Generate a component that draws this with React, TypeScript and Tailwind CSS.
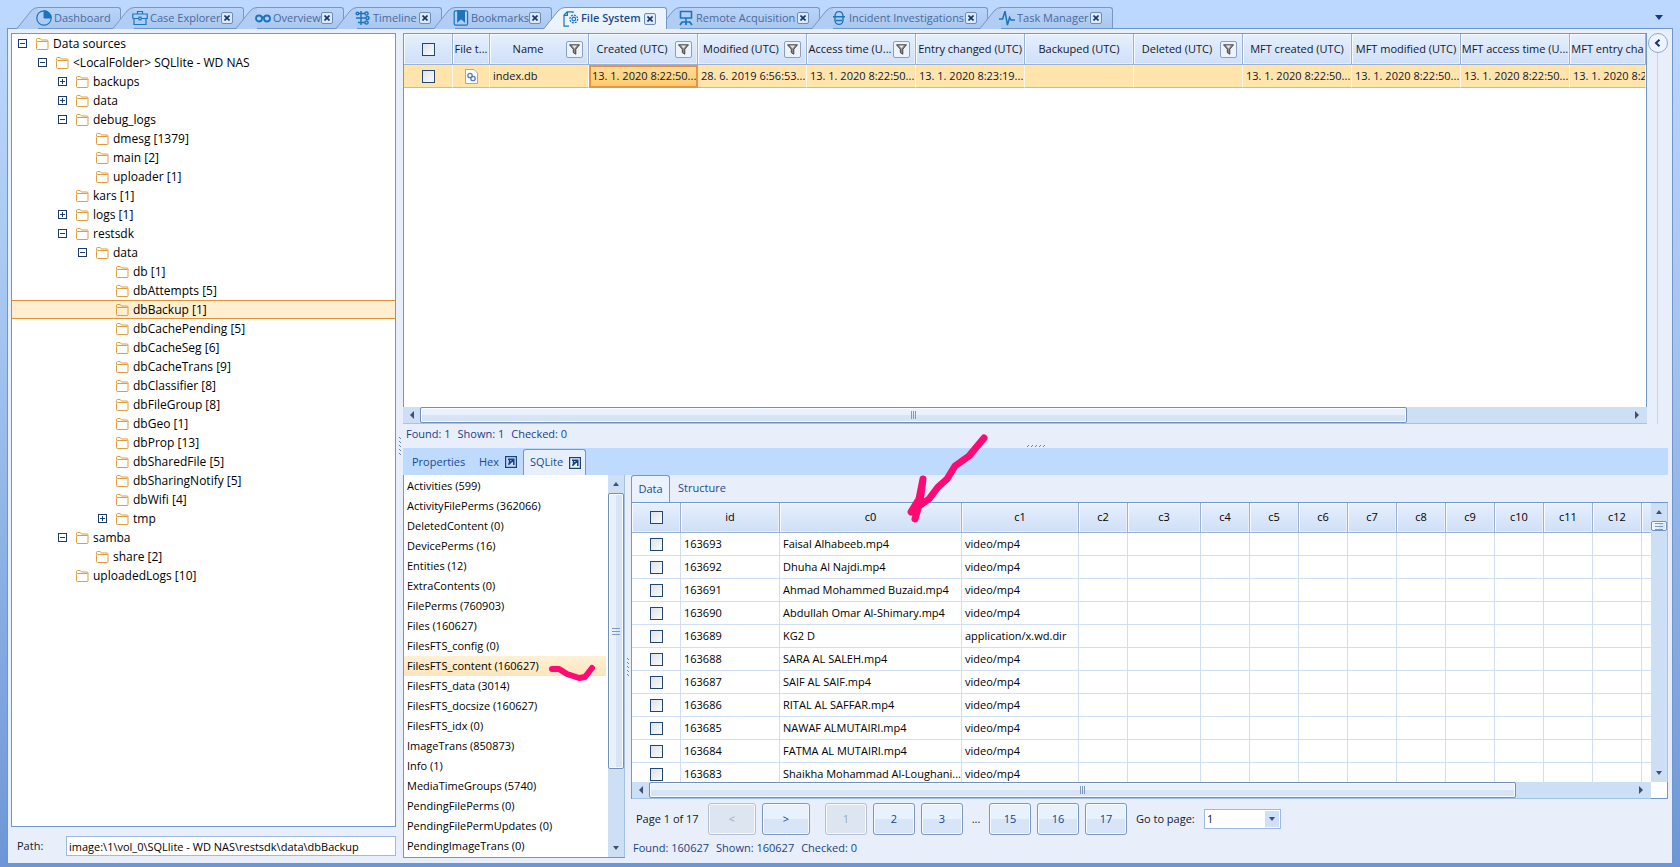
import type { ReactNode } from 'react';

type IconName = 'dashboard' | 'case' | 'overview' | 'timeline' | 'bookmark' | 'file' | 'remote' | 'incident' | 'task';

const tabs: { label: string; icon: IconName; width: string; closable: boolean; active?: boolean }[] = [
  { label: 'Dashboard', icon: 'dashboard', width: 'w-[104px]', closable: false },
  { label: 'Case Explorer', icon: 'case', width: 'w-[131px]', closable: true },
  { label: 'Overview', icon: 'overview', width: 'w-[108px]', closable: true },
  { label: 'Timeline', icon: 'timeline', width: 'w-[106px]', closable: true },
  { label: 'Bookmarks', icon: 'bookmark', width: 'w-[118px]', closable: true },
  { label: 'File System', icon: 'file', width: 'w-[123px]', closable: true, active: true },
  { label: 'Remote Acquisition', icon: 'remote', width: 'w-[161px]', closable: true },
  { label: 'Incident Investigations', icon: 'incident', width: 'w-[176px]', closable: true },
  { label: 'Task Manager', icon: 'task', width: 'w-[133px]', closable: true },
];

const levelPadding = ['pl-[6px]', 'pl-[26px]', 'pl-[46px]', 'pl-[66px]', 'pl-[86px]'];

const treeNodes: { label: string; level: number; state?: 'open' | 'closed'; selected?: boolean }[] = [
  { label: 'Data sources', level: 0, state: 'open' },
  { label: '<LocalFolder> SQLlite - WD NAS', level: 1, state: 'open' },
  { label: 'backups', level: 2, state: 'closed' },
  { label: 'data', level: 2, state: 'closed' },
  { label: 'debug_logs', level: 2, state: 'open' },
  { label: 'dmesg [1379]', level: 3 },
  { label: 'main [2]', level: 3 },
  { label: 'uploader [1]', level: 3 },
  { label: 'kars [1]', level: 2 },
  { label: 'logs [1]', level: 2, state: 'closed' },
  { label: 'restsdk', level: 2, state: 'open' },
  { label: 'data', level: 3, state: 'open' },
  { label: 'db [1]', level: 4 },
  { label: 'dbAttempts [5]', level: 4 },
  { label: 'dbBackup [1]', level: 4, selected: true },
  { label: 'dbCachePending [5]', level: 4 },
  { label: 'dbCacheSeg [6]', level: 4 },
  { label: 'dbCacheTrans [9]', level: 4 },
  { label: 'dbClassifier [8]', level: 4 },
  { label: 'dbFileGroup [8]', level: 4 },
  { label: 'dbGeo [1]', level: 4 },
  { label: 'dbProp [13]', level: 4 },
  { label: 'dbSharedFile [5]', level: 4 },
  { label: 'dbSharingNotify [5]', level: 4 },
  { label: 'dbWifi [4]', level: 4 },
  { label: 'tmp', level: 4, state: 'closed' },
  { label: 'samba', level: 2, state: 'open' },
  { label: 'share [2]', level: 3 },
  { label: 'uploadedLogs [10]', level: 2 },
];

const fileColumns: { label: string; value: string; filter?: boolean; width: string }[] = [
  { label: 'Name', value: 'index.db', filter: true, width: 'w-[99px]' },
  { label: 'Created (UTC)', value: '13. 1. 2020 8:22:50...', filter: true, width: 'w-[109px]' },
  { label: 'Modified (UTC)', value: '28. 6. 2019 6:56:53...', filter: true, width: 'w-[109px]' },
  { label: 'Access time (U...', value: '13. 1. 2020 8:22:50...', filter: true, width: 'w-[109px]' },
  { label: 'Entry changed (UTC)', value: '13. 1. 2020 8:23:19...', width: 'w-[109px]' },
  { label: 'Backuped (UTC)', value: '', width: 'w-[109px]' },
  { label: 'Deleted (UTC)', value: '', filter: true, width: 'w-[109px]' },
  { label: 'MFT created (UTC)', value: '13. 1. 2020 8:22:50...', width: 'w-[109px]' },
  { label: 'MFT modified (UTC)', value: '13. 1. 2020 8:22:50...', width: 'w-[109px]' },
  { label: 'MFT access time (U...', value: '13. 1. 2020 8:22:50...', width: 'w-[109px]' },
  { label: 'MFT entry cha', value: '13. 1. 2020 8:2', width: 'w-auto' },
];

const sqlTables = [
  'Activities (599)',
  'ActivityFilePerms (362066)',
  'DeletedContent (0)',
  'DevicePerms (16)',
  'Entities (12)',
  'ExtraContents (0)',
  'FilePerms (760903)',
  'Files (160627)',
  'FilesFTS_config (0)',
  'FilesFTS_content (160627)',
  'FilesFTS_data (3014)',
  'FilesFTS_docsize (160627)',
  'FilesFTS_idx (0)',
  'ImageTrans (850873)',
  'Info (1)',
  'MediaTimeGroups (5740)',
  'PendingFilePerms (0)',
  'PendingFilePermUpdates (0)',
  'PendingImageTrans (0)',
];

const rows = [
  ['163693', 'Faisal Alhabeeb.mp4', 'video/mp4'],
  ['163692', 'Dhuha Al Najdi.mp4', 'video/mp4'],
  ['163691', 'Ahmad Mohammed Buzaid.mp4', 'video/mp4'],
  ['163690', 'Abdullah Omar Al-Shimary.mp4', 'video/mp4'],
  ['163689', 'KG2 D', 'application/x.wd.dir'],
  ['163688', 'SARA AL SALEH.mp4', 'video/mp4'],
  ['163687', 'SAIF AL SAIF.mp4', 'video/mp4'],
  ['163686', 'RITAL AL SAFFAR.mp4', 'video/mp4'],
  ['163685', 'NAWAF ALMUTAIRI.mp4', 'video/mp4'],
  ['163684', 'FATMA AL MUTAIRI.mp4', 'video/mp4'],
  ['163683', 'Shaikha Mohammad Al-Loughani...', 'video/mp4'],
];

const dataColumns = [
  { label: 'id', width: 'w-[99px]' },
  { label: 'c0', width: 'w-[182px]' },
  { label: 'c1', width: 'w-[117px]' },
  { label: 'c2', width: 'w-[49px]' },
  { label: 'c3', width: 'w-[73px]' },
  { label: 'c4', width: 'w-[49px]' },
  { label: 'c5', width: 'w-[49px]' },
  { label: 'c6', width: 'w-[49px]' },
  { label: 'c7', width: 'w-[49px]' },
  { label: 'c8', width: 'w-[49px]' },
  { label: 'c9', width: 'w-[49px]' },
  { label: 'c10', width: 'w-[49px]' },
  { label: 'c11', width: 'w-[49px]' },
  { label: 'c12', width: 'w-[49px]' },
  { label: '', width: 'w-[49px]' },
];

function TabIcon({ name }: { name: IconName }) {
  const common = { width: 16, height: 16, viewBox: '0 0 16 16', fill: 'none', stroke: '#1b75bb', className: 'shrink-0' };
  switch (name) {
    case 'dashboard':
      return (
        <svg {...common}>
          <circle cx="8" cy="8" r="7.2" strokeWidth="1.2" />
          <path d="M8 0.8A7.2 7.2 0 0 1 15.2 8H8z" fill="#1b75bb" />
        </svg>
      );
    case 'case':
      return (
        <svg {...common} strokeWidth="1.2">
          <path d="M5.5 4V1.5h5V4M.8 8.500V4h14.4v4.500H.8M2 8.500v6h12v-6" />
          <rect x="7" y="7.2" width="2" height="2.6" fill="#fff" />
        </svg>
      );
    case 'overview':
      return (
        <svg {...common} strokeWidth="1.8">
          <circle cx="4" cy="8.5" r="3" />
          <circle cx="12" cy="8.5" r="3" />
          <path d="M6.8 7.6q1.2-.8 2.4 0" />
        </svg>
      );
    case 'timeline':
      return (
        <svg {...common} strokeWidth="1.5">
          <path d="M6 1v14M1 3.500h9M1 8h10M3 12.500h7" />
          <circle cx="11.500" cy="3.500" r="1.6" fill="#b1cdf3" />
          <circle cx="12.500" cy="8" r="1.500" fill="#b1cdf3" />
          <circle cx="11.500" cy="12.500" r="1.6" fill="#b1cdf3" />
          <circle cx="2.500" cy="3.500" r="1.300" fill="#b1cdf3" />
        </svg>
      );
    case 'bookmark':
      return (
        <svg {...common} strokeWidth="1.2">
          <rect x="1.2" y=".8" width="13.4" height="14.4" rx="1.5" />
          <path d="M4.8.8h6.6v10.6L8.1 8.6l-3.3 2.8z" fill="#1b75bb" />
        </svg>
      );
    case 'file':
      return (
        <svg {...common} strokeWidth="1.2">
          <path d="M10 2V.8H4.2L1 4v11.2h5M1 4.4h3.4V1" />
          <circle cx="10.8" cy="8" r="3.9" strokeDasharray="2 1" />
          <circle cx="10.8" cy="8" r="1.8" />
        </svg>
      );
    case 'remote':
      return (
        <svg {...common} strokeWidth="1.6">
          <path d="M2.5 1.5h11v6.5h-11zM8 8v4M4 12h8" />
          <path d="M2 15l2.4-3.2M14 15l-2.4-3.2M8 12v3" strokeWidth="1.8" />
        </svg>
      );
    case 'incident':
      return (
        <svg {...common} strokeWidth="1.4">
          <path d="M4 6.5C4 3.5 5.5 1.6 8 1.6s4 1.9 4 4.9M2 6.8h12M4 7v3.2c0 2.3 1.8 4.2 4 4.2s4-1.9 4-4.2V7M5 10.5h6" />
        </svg>
      );
    case 'task':
      return (
        <svg {...common} strokeWidth="1.5">
          <path d="M0 9h3.6L6 1.2 8.4 15l2.2-7.6L12 10h4" />
        </svg>
      );
  }
}

function FolderIcon() {
  return (
    <svg width="13" height="12" viewBox="0 0 13 12" fill="none" stroke="#e09b3d" className="shrink-0">
      <path d="M.5 3.500V1.500q0-1 1-1h2.700l1.300 1.500h5.500q1 0 1 1v7.500q0 1-1 1h-9.500q-1 0-1-1v-6q0-1 1-1h10" />
    </svg>
  );
}

function Toggle({ open }: { open: boolean }) {
  return (
    <svg width="9" height="9" viewBox="0 0 9 9" fill="none" stroke="#1d3c66">
      <rect x=".5" y=".5" width="8" height="8" fill="#fff" />
      <path d={open ? 'M2 4.5h5' : 'M2 4.5h5M4.5 2v5'} />
    </svg>
  );
}

function Filter() {
  return (
    <button
      aria-label="Filter"
      className="mr-[5px] flex h-[17px] w-[17px] shrink-0 items-center justify-center rounded-xs border border-[#8aa0c0] bg-[#edf3fb]"
    >
      <svg width="11" height="11" viewBox="0 0 11 11">
        <path d="M.5.8h10L6.8 5.2v5L4.3 8.6V5.2z" fill="#8b8b8b" stroke="#3a3a3a" strokeWidth=".9" />
        <path d="M3 1.6h5L5.5 4.4z" fill="#e6e6e6" />
      </svg>
    </button>
  );
}

function Check({ label }: { label: string }) {
  return (
    <input
      type="checkbox"
      aria-label={label}
      className="block h-[13px] w-[13px] appearance-none border border-[#24466f] bg-linear-to-br from-[#dde1e8] to-[#fafbfc]"
    />
  );
}

function Arrow({ dir }: { dir: 'up' | 'down' | 'left' | 'right' }) {
  const paths = { up: 'M1 6l3-4 3 4z', down: 'M1 2l3 4 3-4z', left: 'M6 0L2 4l4 4z', right: 'M2 0l4 4-4 4z' };
  return (
    <svg width="8" height="8" viewBox="0 0 8 8" fill="#3d5170">
      <path d={paths[dir]} />
    </svg>
  );
}

function HScroll({ thumb }: { thumb: string }) {
  return (
    <div className="flex h-[17px] shrink-0 border-b border-[#a5c2e8] bg-[#cddff5]">
      <button aria-label="Scroll left" className="flex w-[17px] items-center justify-center">
        <Arrow dir="left" />
      </button>
      <div className="flex-1">
        <div
          className={`flex h-4 items-center justify-center gap-[1px] rounded-xs border border-[#7391b8] bg-linear-to-b from-[#e8f1fc] from-50% to-[#d6e4f5] to-50% shadow-[inset_0_0_0_1px_#f8fbff] ${thumb}`}
        >
          <span className="h-2 w-px bg-[#7f9ac0]" />
          <span className="h-2 w-px bg-[#7f9ac0]" />
          <span className="h-2 w-px bg-[#7f9ac0]" />
        </div>
      </div>
      <button aria-label="Scroll right" className="flex w-5 items-center justify-center">
        <Arrow dir="right" />
      </button>
    </div>
  );
}

function VScroll({ thumb }: { thumb: string }) {
  return (
    <div className="flex w-[17px] shrink-0 flex-col border-r border-[#a5c2e8] bg-[#cddff5]">
      <button aria-label="Scroll up" className="flex h-[18px] items-center justify-center">
        <Arrow dir="up" />
      </button>
      <div className="min-h-0 flex-1">
        <div
          className={`flex w-4 flex-col items-center justify-center gap-[2px] rounded-xs border border-[#7391b8] bg-linear-to-r from-[#e8f1fc] from-50% to-[#d6e4f5] to-50% shadow-[inset_0_0_0_1px_#f8fbff] ${thumb}`}
        >
          <span className="h-px w-2 bg-[#7f9ac0]" />
          <span className="h-px w-2 bg-[#7f9ac0]" />
          <span className="h-px w-2 bg-[#7f9ac0]" />
        </div>
      </div>
      <button aria-label="Scroll down" className="flex h-[19px] items-center justify-center">
        <Arrow dir="down" />
      </button>
    </div>
  );
}

function HeadCell({ children }: { children?: ReactNode }) {
  return (
    <th className="overflow-hidden border-r border-b border-[#9ab3d4] bg-linear-to-b from-[#e6f0fd] to-[#cfdff7] p-0 font-normal whitespace-nowrap shadow-[inset_1px_1px_0_#f7fbff,inset_-1px_-1px_0_#e6effb]">
      {children}
    </th>
  );
}

function Tab({ label, icon, width, closable, active }: (typeof tabs)[number]) {
  return (
    <div className={`relative -mr-2 flex shrink-0 ${width} ${active ? 'z-10 -mb-px h-[22px]' : 'h-[21px]'}`}>
      <svg width="21" height="22" viewBox="0 0 21 22" className="shrink-0">
        <path d="M0 22L14 4Q17 .5 21 .5V22z" fill={active ? '#ebf3fd' : '#b1cdf3'} />
        <path d="M0 21.5L14 4Q17 .5 21 .5" fill="none" stroke="#7797c6" />
      </svg>
      <div
        className={`flex min-w-0 flex-1 items-center rounded-tr-[3px] border-t border-r border-[#7797c6] ${
          active ? 'bg-[#ebf3fd]' : 'bg-linear-to-b from-[#b9d4f8] to-[#a9c7ef]'
        }`}
      >
        <button
          className={`-ml-[2px] flex items-center gap-[2px] text-[11px] whitespace-nowrap ${
            active ? 'font-semibold text-[#1c4a8e]' : 'text-[#4a6a9c]'
          }`}
        >
          <TabIcon name={icon} />
          {label}
        </button>
        {closable && (
          <button
            aria-label={`Close ${label}`}
            className="mr-[10px] ml-auto flex h-[12px] w-[12px] shrink-0 items-center justify-center rounded-xs border border-[#6d8cb8] bg-[#dbe9fb]"
          >
            <svg width="6" height="6" viewBox="0 0 6 6" stroke="#15366b" strokeWidth="1.6">
              <path d="M.5.5l5 5M5.5.5l-5 5" />
            </svg>
          </button>
        )}
      </div>
    </div>
  );
}

function Tree() {
  return (
    <ul className="min-h-0 flex-1 overflow-hidden border border-[#6f98cc] bg-white text-[12px] text-black">
      {treeNodes.map((node, index) => (
        <li
          key={index}
          className={`flex h-[19px] items-center border-y ${levelPadding[node.level]} ${
            node.selected ? 'border-[#e0913a] bg-[#ffefd0]' : 'border-transparent'
          }`}
        >
          <span className="flex w-[18px] shrink-0">{node.state && <Toggle open={node.state === 'open'} />}</span>
          <button className="flex items-center gap-1 whitespace-nowrap">
            <FolderIcon />
            {node.label}
          </button>
        </li>
      ))}
    </ul>
  );
}

function FileGrid() {
  return (
    <section className="flex min-h-0 shrink grow basis-[5px] flex-col">
      <div className="flex min-h-0 flex-1">
        <div className="flex min-w-0 flex-1 flex-col">
          <div className="flex min-h-0 flex-1 flex-col border-t border-r border-l border-[#6f98cc] bg-white">
            <div className="min-h-0 flex-1 overflow-hidden">
              <table className="w-full min-w-[1240px] table-fixed border-separate border-spacing-0 text-[11px] text-[#101830]">
                <colgroup>
                  <col className="w-[49px]" />
                  <col className="w-[37px]" />
                  {fileColumns.map((col) => (
                    <col key={col.label} className={col.width} />
                  ))}
                </colgroup>
                <thead>
                  <tr className="h-[31px]">
                    <HeadCell>
                      <div className="flex justify-center">
                        <Check label="Select all files" />
                      </div>
                    </HeadCell>
                    <HeadCell>File t...</HeadCell>
                    {fileColumns.map((col) => (
                      <HeadCell key={col.label}>
                        <div className="flex items-center">
                          <span className="flex-1 text-center">{col.label}</span>
                          {col.filter && <Filter />}
                        </div>
                      </HeadCell>
                    ))}
                  </tr>
                </thead>
                <tbody>
                  <tr className="h-[23px]">
                    <td className="border-r border-b border-r-[#fff8e8] border-b-[#efb173] bg-[#ffe5ab] p-0">
                      <div className="flex justify-center">
                        <Check label="Select index.db" />
                      </div>
                    </td>
                    <td className="border-r border-b border-r-[#fff8e8] border-b-[#efb173] bg-[#ffe5ab] p-0">
                      <svg width="13" height="15" viewBox="0 0 13 15" fill="none" className="mx-auto">
                        <path d="M.5.5h8.5l3.5 3.5v10.5H.5z" fill="#fbfbfb" stroke="#a3a9b3" />
                        <circle cx="5" cy="6.500" r="2.2" stroke="#5b7fae" strokeWidth="1.3" />
                        <circle cx="8" cy="9.500" r="2.2" stroke="#5b7fae" strokeWidth="1.3" />
                      </svg>
                    </td>
                    {fileColumns.map((col, index) => (
                      <td
                        key={col.label}
                        className={`overflow-hidden py-0 pr-0 whitespace-nowrap ${
                          index === 1
                            ? 'border-2 border-[#e8924a] bg-linear-to-b from-[#ffdd96] to-[#ffcc6b] pl-px'
                            : 'border-r border-b border-r-[#fff8e8] border-b-[#efb173] bg-[#ffe5ab] pl-[3px]'
                        }`}
                      >
                        {col.value}
                      </td>
                    ))}
                  </tr>
                </tbody>
              </table>
            </div>
          </div>
          <HScroll thumb="mr-[220px]" />
        </div>
        <div className="flex w-[21px] flex-col items-center">
          <button
            aria-label="Expand panel"
            className="flex h-[20px] w-[20px] shrink-0 items-center justify-center rounded-full border border-[#8ba8d0] bg-[#eef4fc]"
          >
            <svg width="7" height="8" viewBox="0 0 7 8" fill="none" stroke="#15366b" strokeWidth="2">
              <path d="M5.5.8L2 4l3.5 3.2" />
            </svg>
          </button>
          <span className="w-px flex-1 bg-[#c3d6ee]" />
        </div>
      </div>
      <p className="flex h-5 items-center gap-[7px] pl-[3px] text-[11px] text-[#1c3f87]">
        <span>Found: 1</span>
        <span>Shown: 1</span>
        <span>Checked: 0</span>
      </p>
      <Grip />
    </section>
  );
}

function Grip() {
  return (
    <svg width="20" height="4" viewBox="0 0 20 4" className="mx-auto shrink-0" stroke="#5f86bd">
      <path d="M1 3l2-2M5 3l2-2M9 3l2-2M13 3l2-2M17 3l2-2" />
    </svg>
  );
}

function VGrip() {
  return (
    <svg width="4" height="20" viewBox="0 0 4 20" stroke="#5f86bd">
      <path d="M1 1l2 2M1 5l2 2M1 9l2 2M1 13l2 2M1 17l2 2" />
    </svg>
  );
}

function PopOut() {
  return (
    <svg width="12" height="12" viewBox="0 0 12 12" fill="none" stroke="#1d3f78" className="shrink-0">
      <rect x=".6" y=".6" width="10.8" height="10.8" strokeWidth="1.2" />
      <path d="M3 3.2h5.8V9M8.6 3.4L3.4 8.6M4.5 3.8v3" strokeWidth="1.5" />
    </svg>
  );
}

function TableList() {
  return (
    <div className="flex min-h-0 w-[222px] shrink-0 overflow-hidden border-b border-l border-[#6f98cc] bg-white">
      <ul className="min-w-0 flex-1 pt-px text-[11px] text-black">
        {sqlTables.map((name) => {
          const selected = name.startsWith('FilesFTS_content');
          return (
            <li key={name} className="h-5 pr-[2px]">
              <button
                className={`relative flex h-full w-full items-center pl-[3px] whitespace-nowrap ${
                  selected ? 'bg-linear-to-b from-[#fff1d6] to-[#fde5bd]' : ''
                }`}
              >
                {name}
                {selected && (
                  <svg
                    width="52"
                    height="24"
                    viewBox="0 0 52 24"
                    fill="none"
                    stroke="#ff0a74"
                    strokeWidth="6"
                    strokeLinecap="round"
                    strokeLinejoin="round"
                    className="absolute top-1 right-2"
                  >
                    <path d="M6 9h7l8 5 12 4 6-1 7-9" />
                  </svg>
                )}
              </button>
            </li>
          );
        })}
      </ul>
      <VScroll thumb="h-[80%]" />
    </div>
  );
}

function PageButton({ label, disabled, wide }: { label: string; disabled?: boolean; wide?: boolean }) {
  return (
    <button
      disabled={disabled}
      className={`h-8 rounded-[3px] border text-[11px] shadow-[inset_0_0_0_1px_#f6faff] ${wide ? 'w-12' : 'w-[42px]'} ${
        disabled
          ? 'border-[#b6c0cd] bg-[#dde6f0] text-[#9ba9bb]'
          : 'border-[#7c99c2] bg-linear-to-b from-[#e9f1fc] from-50% to-[#d7e5f7] to-50% text-[#1c3f87]'
      }`}
    >
      {label}
    </button>
  );
}

function DataGrid() {
  return (
    <div className="flex min-h-0 min-w-0 flex-1 flex-col">
      <div className="flex h-[27px] shrink-0 text-[11px] text-[#1c4a8e]">
        <button className="w-[39px] rounded-t-[3px] border border-b-0 border-[#6f98cc] bg-[#eaf2fd]">Data</button>
        <button className="px-2">Structure</button>
      </div>
      <div className="relative flex min-h-0 flex-1 border-t border-l border-[#6f98cc]">
        <div className="flex min-w-0 flex-1 flex-col bg-white">
          <div className="min-h-0 flex-1 overflow-hidden">
            <table className="w-[1059px] table-fixed border-separate border-spacing-0 text-[11px] text-black">
              <colgroup>
                <col className="w-[49px]" />
                {dataColumns.map((col) => (
                  <col key={col.label} className={col.width} />
                ))}
              </colgroup>
              <thead>
                <tr className="h-[30px]">
                  <HeadCell>
                    <div className="flex justify-center">
                      <Check label="Select all rows" />
                    </div>
                  </HeadCell>
                  {dataColumns.map((col) => (
                    <HeadCell key={col.label}>{col.label}</HeadCell>
                  ))}
                </tr>
              </thead>
              <tbody>
                {rows.map((row) => (
                  <tr key={row[0]} className="h-[23px]">
                    <td className="border-r border-b border-[#d0dff3] p-0">
                      <div className="flex justify-center">
                        <Check label={`Select row ${row[0]}`} />
                      </div>
                    </td>
                    {dataColumns.map((col, index) => (
                      <td
                        key={col.label}
                        className="overflow-hidden border-r border-b border-[#d0dff3] py-0 pr-0 pl-[3px] whitespace-nowrap"
                      >
                        {row[index]}
                      </td>
                    ))}
                  </tr>
                ))}
              </tbody>
            </table>
          </div>
          <HScroll thumb="mr-[115px]" />
        </div>
        <div className="flex flex-col">
          <div className="flex min-h-0 flex-1">
            <VScroll thumb="h-[10px]" />
          </div>
          <div className="h-[17px] border-r border-b border-[#6f98cc] bg-white" />
        </div>
        <svg
          width="86"
          height="92"
          viewBox="0 0 86 92"
          fill="none"
          stroke="#ff0a74"
          strokeWidth="7"
          strokeLinecap="round"
          strokeLinejoin="round"
          className="pointer-events-none absolute -top-[71px] left-[273px]"
        >
          <path d="M79 6L64 24 50 34 42 47l-9 8-9 12-10 7-8 6L14 67l4-20-2 16-2 10-4 14" />
        </svg>
      </div>
      <div className="flex h-[40px] shrink-0 items-center pl-[5px] text-[11px] text-[#101830]">
        <span className="w-[72px]">Page 1 of 17</span>
        <div className="flex gap-[6px]">
          <PageButton label="<" disabled wide />
          <PageButton label=">" wide />
        </div>
        <div className="ml-[15px] flex gap-[6px]">
          <PageButton label="1" disabled />
          <PageButton label="2" />
          <PageButton label="3" />
          <span className="flex w-[14px] items-center justify-center">...</span>
          <PageButton label="15" />
          <PageButton label="16" />
          <PageButton label="17" />
        </div>
        <label htmlFor="goto" className="ml-[9px] w-[68px]">
          Go to page:
        </label>
        <div className="relative">
          <select id="goto" className="h-5 w-[77px] appearance-none border border-[#9cbae2] bg-white pl-[2px] text-[11px]">
            <option>1</option>
          </select>
          <span className="pointer-events-none absolute top-[2px] right-[2px] flex h-4 w-[14px] items-center justify-center bg-[#cfe1fa]">
            <Arrow dir="down" />
          </span>
        </div>
      </div>
      <p className="flex h-[19px] shrink-0 items-center gap-[7px] pl-[2px] text-[11px] text-[#1c3f87]">
        <span>Found: 160627</span>
        <span>Shown: 160627</span>
        <span>Checked: 0</span>
      </p>
    </div>
  );
}

export default function App() {
  return (
    <div className="flex h-screen min-h-[480px] flex-col overflow-hidden bg-linear-to-b from-[#bcd8fe] via-[#a3c4f0] via-40% to-[#6c96d6] px-[7px] pb-[3px] font-['Open_Sans','Noto_Sans',sans-serif]">
      <nav className="-mx-[7px] flex h-[28px] shrink-0 items-end bg-[#bcd8fe] px-[17px]">
        {tabs.map((tab) => (
          <Tab key={tab.label} {...tab} />
        ))}
        <button aria-label="Tab list" className="mb-[8px] ml-auto">
          <svg width="8" height="5" viewBox="0 0 8 5" fill="#123b85">
            <path d="M0 0h8L4 5z" />
          </svg>
        </button>
      </nav>
      <main className="flex min-h-0 flex-1 border border-[#6f95cb] bg-[#e8effa] pt-1 pr-1 pb-[5px] pl-[3px]">
        <aside className="flex w-[385px] shrink-0 flex-col pb-[2px]">
          <Tree />
          <div className="flex h-[29px] shrink-0 items-end">
            <label htmlFor="path" className="w-[55px] pl-[6px] text-[11px] leading-5 text-[#101830]">
              Path:
            </label>
            <input
              id="path"
              defaultValue="image:\1\vol_0\SQLlite - WD NAS\restsdk\data\dbBackup"
              className="h-5 min-w-0 flex-1 border border-[#9cbae2] bg-white px-[2px] text-[11px] text-black"
            />
          </div>
        </aside>
        <div className="flex w-[7px] shrink-0 items-center justify-center">
          <VGrip />
        </div>
        <div className="flex min-w-0 flex-1 flex-col">
          <FileGrid />
          <section className="flex min-h-0 flex-1 flex-col">
            <div className="flex h-[27px] shrink-0 items-end bg-[#bedafe] pl-[9px] text-[11px] text-[#1c4a8e]">
              <button className="h-[26px] w-[67px] text-left">Properties</button>
              <button className="flex h-[26px] w-[44px] items-center gap-[6px]">
                Hex
                <PopOut />
              </button>
              <button className="flex h-[26px] w-[63px] items-center gap-[6px] rounded-t-[3px] border border-b-0 border-[#6f98cc] bg-[#e6effb] pl-[6px]">
                SQLite
                <PopOut />
              </button>
            </div>
            <div className="flex min-h-0 flex-1">
              <TableList />
              <div className="flex w-[6px] shrink-0 items-center justify-center">
                <VGrip />
              </div>
              <DataGrid />
            </div>
          </section>
        </div>
      </main>
    </div>
  );
}
